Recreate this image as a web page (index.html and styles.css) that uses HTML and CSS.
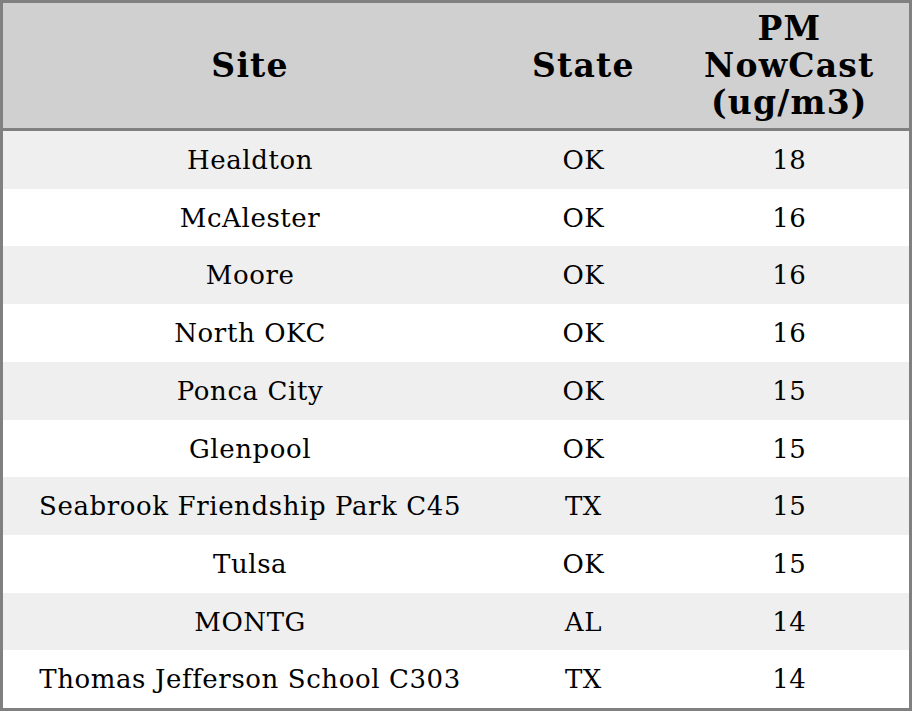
FILE: index.html
```html
<!DOCTYPE html>
<html>
<head>
<meta charset="utf-8">
<link rel="stylesheet" href="styles.css">
</head>
<body>
<table class="data">
  <colgroup>
    <col class="c-site">
    <col class="c-state">
    <col class="c-pm">
  </colgroup>
  <thead>
    <tr><th>Site</th><th>State</th><th>PM<br>NowCast<br>(ug/m3)</th></tr>
  </thead>
  <tbody>
    <tr><td>Healdton</td><td>OK</td><td>18</td></tr>
    <tr><td>McAlester</td><td>OK</td><td>16</td></tr>
    <tr><td>Moore</td><td>OK</td><td>16</td></tr>
    <tr><td>North OKC</td><td>OK</td><td>16</td></tr>
    <tr><td>Ponca City</td><td>OK</td><td>15</td></tr>
    <tr><td>Glenpool</td><td>OK</td><td>15</td></tr>
    <tr><td>Seabrook Friendship Park C45</td><td>TX</td><td>15</td></tr>
    <tr><td>Tulsa</td><td>OK</td><td>15</td></tr>
    <tr><td>MONTG</td><td>AL</td><td>14</td></tr>
    <tr><td>Thomas Jefferson School C303</td><td>TX</td><td>14</td></tr>
  </tbody>
</table>
</body>
</html>
```
FILE: styles.css
```css
html, body {
  margin: 0;
  padding: 0;
  background: #ffffff;
}
.data {
  width: 912px;
  border-collapse: collapse;
  border: 3px solid #808080;
  font-family: "DejaVu Serif", serif;
  color: #000;
  table-layout: fixed;
}
.c-site { width: 494px; }
.c-state { width: 172px; }
.c-pm { width: 240px; }
.data th {
  background: #d0d0d0;
  font-weight: bold;
  font-size: 33px;
  line-height: 37px;
  letter-spacing: 1.2px;
  padding: 7px 0;
  border-bottom: 3px solid #808080;
  text-align: center;
}
.data td {
  font-size: 26px;
  line-height: 29.7px;
  letter-spacing: 0.6px;
  padding: 15px 0 13px;
  text-align: center;
}
.data tbody tr:nth-child(odd) td {
  background: #efefef;
}
```
